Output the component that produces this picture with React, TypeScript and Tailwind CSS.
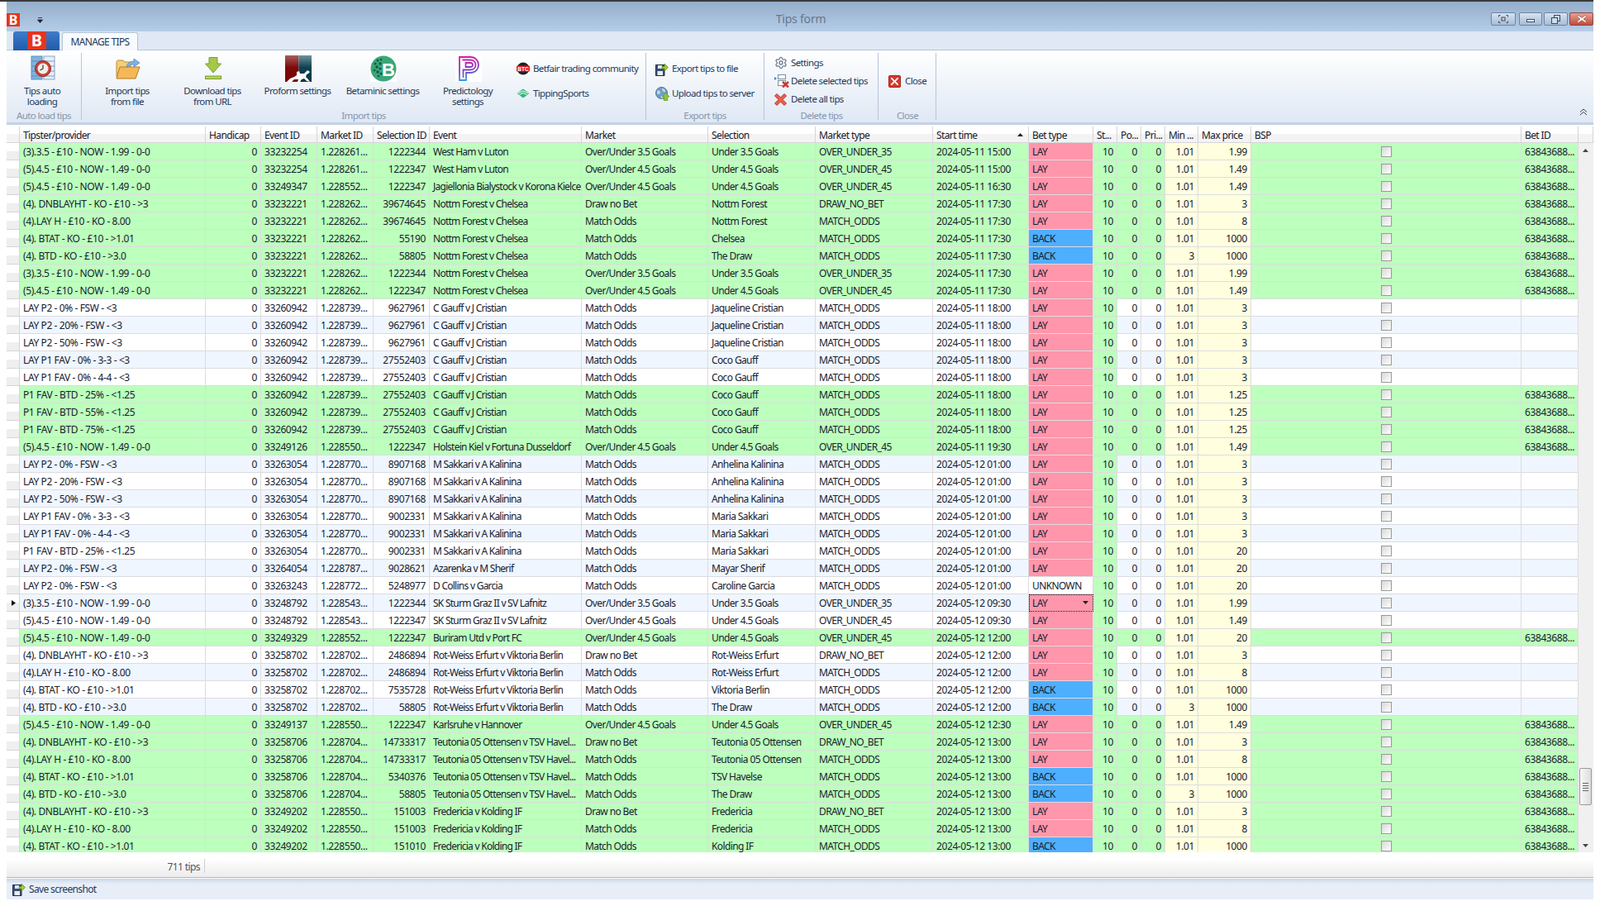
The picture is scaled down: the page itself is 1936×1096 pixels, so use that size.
import { Settings } from 'lucide-react';

type Row = {
  tip: string;
  event: string;
  market: string;
  sel: string;
  name: string;
  mkt: 'O35' | 'O45' | 'DNB' | 'MO';
  runner?: string;
  start: string;
  bet: string;
  min?: string;
  max: string;
  green?: boolean;
  selected?: boolean;
};

const markets = {
  O35: ['Over/Under 3.5 Goals', 'Under 3.5 Goals', 'OVER_UNDER_35'],
  O45: ['Over/Under 4.5 Goals', 'Under 4.5 Goals', 'OVER_UNDER_45'],
  DNB: ['Draw no Bet', '', 'DRAW_NO_BET'],
  MO: ['Match Odds', '', 'MATCH_ODDS'],
};

const T35 = '(3).3.5 - £10 - NOW - 1.99 - 0-0';
const T45 = '(5).4.5 - £10 - NOW - 1.49 - 0-0';
const DNB = '(4). DNBLAYHT - KO - £10 - >3';
const LH = '(4).LAY H - £10 - KO - 8.00';
const BTAT = '(4). BTAT - KO - £10 - >1.01';
const BTD = '(4). BTD - KO - £10 - >3.0';
const P0 = 'LAY P2 - 0% - FSW - <3';
const P20 = 'LAY P2 - 20% - FSW - <3';
const P50 = 'LAY P2 - 50% - FSW - <3';
const F33 = 'LAY P1 FAV - 0% - 3-3 - <3';
const F44 = 'LAY P1 FAV - 0% - 4-4 - <3';
const NF = 'Nottm Forest v Chelsea';
const CG = 'C Gauff v J Cristian';
const MS = 'M Sakkari v A Kalinina';
const RW = 'Rot-Weiss Erfurt v Viktoria Berlin';
const TO = 'Teutonia 05 Ottensen v TSV Havel...';
const FK = 'Fredericia v Kolding IF';

const rows: Row[] = [
  { tip: T35, event: '33232254', market: '1.228261...', sel: '1222344', name: 'West Ham v Luton', mkt: 'O35', start: '2024-05-11 15:00', bet: 'LAY', max: '1.99', green: true },
  { tip: T45, event: '33232254', market: '1.228261...', sel: '1222347', name: 'West Ham v Luton', mkt: 'O45', start: '2024-05-11 15:00', bet: 'LAY', max: '1.49', green: true },
  { tip: T45, event: '33249347', market: '1.228552...', sel: '1222347', name: 'Jagiellonia Bialystock v Korona Kielce', mkt: 'O45', start: '2024-05-11 16:30', bet: 'LAY', max: '1.49', green: true },
  { tip: DNB, event: '33232221', market: '1.228262...', sel: '39674645', name: NF, mkt: 'DNB', runner: 'Nottm Forest', start: '2024-05-11 17:30', bet: 'LAY', max: '3', green: true },
  { tip: LH, event: '33232221', market: '1.228262...', sel: '39674645', name: NF, mkt: 'MO', runner: 'Nottm Forest', start: '2024-05-11 17:30', bet: 'LAY', max: '8', green: true },
  { tip: BTAT, event: '33232221', market: '1.228262...', sel: '55190', name: NF, mkt: 'MO', runner: 'Chelsea', start: '2024-05-11 17:30', bet: 'BACK', max: '1000', green: true },
  { tip: BTD, event: '33232221', market: '1.228262...', sel: '58805', name: NF, mkt: 'MO', runner: 'The Draw', start: '2024-05-11 17:30', bet: 'BACK', min: '3', max: '1000', green: true },
  { tip: T35, event: '33232221', market: '1.228262...', sel: '1222344', name: NF, mkt: 'O35', start: '2024-05-11 17:30', bet: 'LAY', max: '1.99', green: true },
  { tip: T45, event: '33232221', market: '1.228262...', sel: '1222347', name: NF, mkt: 'O45', start: '2024-05-11 17:30', bet: 'LAY', max: '1.49', green: true },
  { tip: P0, event: '33260942', market: '1.228739...', sel: '9627961', name: CG, mkt: 'MO', runner: 'Jaqueline Cristian', start: '2024-05-11 18:00', bet: 'LAY', max: '3' },
  { tip: P20, event: '33260942', market: '1.228739...', sel: '9627961', name: CG, mkt: 'MO', runner: 'Jaqueline Cristian', start: '2024-05-11 18:00', bet: 'LAY', max: '3' },
  { tip: P50, event: '33260942', market: '1.228739...', sel: '9627961', name: CG, mkt: 'MO', runner: 'Jaqueline Cristian', start: '2024-05-11 18:00', bet: 'LAY', max: '3' },
  { tip: F33, event: '33260942', market: '1.228739...', sel: '27552403', name: CG, mkt: 'MO', runner: 'Coco Gauff', start: '2024-05-11 18:00', bet: 'LAY', max: '3' },
  { tip: F44, event: '33260942', market: '1.228739...', sel: '27552403', name: CG, mkt: 'MO', runner: 'Coco Gauff', start: '2024-05-11 18:00', bet: 'LAY', max: '3' },
  { tip: 'P1 FAV - BTD - 25% - <1.25', event: '33260942', market: '1.228739...', sel: '27552403', name: CG, mkt: 'MO', runner: 'Coco Gauff', start: '2024-05-11 18:00', bet: 'LAY', max: '1.25', green: true },
  { tip: 'P1 FAV - BTD - 55% - <1.25', event: '33260942', market: '1.228739...', sel: '27552403', name: CG, mkt: 'MO', runner: 'Coco Gauff', start: '2024-05-11 18:00', bet: 'LAY', max: '1.25', green: true },
  { tip: 'P1 FAV - BTD - 75% - <1.25', event: '33260942', market: '1.228739...', sel: '27552403', name: CG, mkt: 'MO', runner: 'Coco Gauff', start: '2024-05-11 18:00', bet: 'LAY', max: '1.25', green: true },
  { tip: T45, event: '33249126', market: '1.228550...', sel: '1222347', name: 'Holstein Kiel v Fortuna Dusseldorf', mkt: 'O45', start: '2024-05-11 19:30', bet: 'LAY', max: '1.49', green: true },
  { tip: P0, event: '33263054', market: '1.228770...', sel: '8907168', name: MS, mkt: 'MO', runner: 'Anhelina Kalinina', start: '2024-05-12 01:00', bet: 'LAY', max: '3' },
  { tip: P20, event: '33263054', market: '1.228770...', sel: '8907168', name: MS, mkt: 'MO', runner: 'Anhelina Kalinina', start: '2024-05-12 01:00', bet: 'LAY', max: '3' },
  { tip: P50, event: '33263054', market: '1.228770...', sel: '8907168', name: MS, mkt: 'MO', runner: 'Anhelina Kalinina', start: '2024-05-12 01:00', bet: 'LAY', max: '3' },
  { tip: F33, event: '33263054', market: '1.228770...', sel: '9002331', name: MS, mkt: 'MO', runner: 'Maria Sakkari', start: '2024-05-12 01:00', bet: 'LAY', max: '3' },
  { tip: F44, event: '33263054', market: '1.228770...', sel: '9002331', name: MS, mkt: 'MO', runner: 'Maria Sakkari', start: '2024-05-12 01:00', bet: 'LAY', max: '3' },
  { tip: 'P1 FAV - BTD - 25% - <1.25', event: '33263054', market: '1.228770...', sel: '9002331', name: MS, mkt: 'MO', runner: 'Maria Sakkari', start: '2024-05-12 01:00', bet: 'LAY', max: '20' },
  { tip: P0, event: '33264054', market: '1.228787...', sel: '9028621', name: 'Azarenka v M Sherif', mkt: 'MO', runner: 'Mayar Sherif', start: '2024-05-12 01:00', bet: 'LAY', max: '20' },
  { tip: P0, event: '33263243', market: '1.228772...', sel: '5248977', name: 'D Collins v Garcia', mkt: 'MO', runner: 'Caroline Garcia', start: '2024-05-12 01:00', bet: 'UNKNOWN', max: '20' },
  { tip: T35, event: '33248792', market: '1.228543...', sel: '1222344', name: 'SK Sturm Graz II v SV Lafnitz', mkt: 'O35', start: '2024-05-12 09:30', bet: 'LAY', max: '1.99', selected: true },
  { tip: T45, event: '33248792', market: '1.228543...', sel: '1222347', name: 'SK Sturm Graz II v SV Lafnitz', mkt: 'O45', start: '2024-05-12 09:30', bet: 'LAY', max: '1.49' },
  { tip: T45, event: '33249329', market: '1.228552...', sel: '1222347', name: 'Buriram Utd v Port FC', mkt: 'O45', start: '2024-05-12 12:00', bet: 'LAY', max: '20', green: true },
  { tip: DNB, event: '33258702', market: '1.228702...', sel: '2486894', name: RW, mkt: 'DNB', runner: 'Rot-Weiss Erfurt', start: '2024-05-12 12:00', bet: 'LAY', max: '3' },
  { tip: LH, event: '33258702', market: '1.228702...', sel: '2486894', name: RW, mkt: 'MO', runner: 'Rot-Weiss Erfurt', start: '2024-05-12 12:00', bet: 'LAY', max: '8' },
  { tip: BTAT, event: '33258702', market: '1.228702...', sel: '7535728', name: RW, mkt: 'MO', runner: 'Viktoria Berlin', start: '2024-05-12 12:00', bet: 'BACK', max: '1000' },
  { tip: BTD, event: '33258702', market: '1.228702...', sel: '58805', name: RW, mkt: 'MO', runner: 'The Draw', start: '2024-05-12 12:00', bet: 'BACK', min: '3', max: '1000' },
  { tip: T45, event: '33249137', market: '1.228550...', sel: '1222347', name: 'Karlsruhe v Hannover', mkt: 'O45', start: '2024-05-12 12:30', bet: 'LAY', max: '1.49', green: true },
  { tip: DNB, event: '33258706', market: '1.228704...', sel: '14733317', name: TO, mkt: 'DNB', runner: 'Teutonia 05 Ottensen', start: '2024-05-12 13:00', bet: 'LAY', max: '3', green: true },
  { tip: LH, event: '33258706', market: '1.228704...', sel: '14733317', name: TO, mkt: 'MO', runner: 'Teutonia 05 Ottensen', start: '2024-05-12 13:00', bet: 'LAY', max: '8', green: true },
  { tip: BTAT, event: '33258706', market: '1.228704...', sel: '5340376', name: TO, mkt: 'MO', runner: 'TSV Havelse', start: '2024-05-12 13:00', bet: 'BACK', max: '1000', green: true },
  { tip: BTD, event: '33258706', market: '1.228704...', sel: '58805', name: TO, mkt: 'MO', runner: 'The Draw', start: '2024-05-12 13:00', bet: 'BACK', min: '3', max: '1000', green: true },
  { tip: DNB, event: '33249202', market: '1.228550...', sel: '151003', name: FK, mkt: 'DNB', runner: 'Fredericia', start: '2024-05-12 13:00', bet: 'LAY', max: '3', green: true },
  { tip: LH, event: '33249202', market: '1.228550...', sel: '151003', name: FK, mkt: 'MO', runner: 'Fredericia', start: '2024-05-12 13:00', bet: 'LAY', max: '8', green: true },
  { tip: BTAT, event: '33249202', market: '1.228550...', sel: '151010', name: FK, mkt: 'MO', runner: 'Kolding IF', start: '2024-05-12 13:00', bet: 'BACK', max: '1000', green: true },
];

const gridCols =
  'grid grid-cols-[16px_225px_67px_68px_68px_68px_184px_153px_130px_142px_116px_78px_29px_29px_29px_40px_64px_327px_69px]';
const cell = 'h-[21px] overflow-hidden whitespace-nowrap border-r border-b border-[#dcdce0] px-[4px] leading-[22px]';
const wordCell = `${cell} tracking-[-0.62px]`;
const eventCell = `${cell} tracking-[-0.74px]`;
const headCell = 'h-[20px] overflow-hidden whitespace-nowrap border-r border-b border-[#d5d5d8] pl-[4px] pr-[2px] leading-[21px] tracking-[-0.6px] bg-gradient-to-b from-white from-50% to-[#f3f3f3] to-50%';
const ribbonText = 'text-[11.5px] tracking-[-0.62px] text-[#1e395b]';

const headers = ['', 'Tipster/provider', 'Handicap', 'Event ID', 'Market ID', 'Selection ID', 'Event', 'Market', 'Selection', 'Market type', 'Start time', 'Bet type', 'St...', 'Po...', 'Pri...', 'Min ...', 'Max price', 'BSP', 'Bet ID'];

function TipRow({ row, index }: { row: Row; index: number }) {
  const [marketName, sel, type] = markets[row.mkt];
  const bg = row.green ? 'bg-[#bdffbd]' : index % 2 === 0 ? 'bg-[#eff6ff]' : 'bg-white';
  const betBg = row.bet === 'LAY' ? 'bg-[#ff96ab]' : row.bet === 'BACK' ? 'bg-[#4fafff]' : 'bg-white';
  return (
    <div className={`${gridCols} ${bg}`}>
      <div className="relative h-[21px] border-r border-b border-[#d5d5d8] bg-gradient-to-b from-white from-50% to-[#efefef] to-50%">
        {row.selected && (
          <svg className="absolute left-[6px] top-[7px]" width="5" height="7" viewBox="0 0 5 7">
            <path d="M0 0L5 3.5L0 7z" fill="#111" />
          </svg>
        )}
      </div>
      <div className={cell}>{row.tip}</div>
      <div className={`${cell} text-right`}>0</div>
      <div className={cell}>{row.event}</div>
      <div className={cell}>{row.market}</div>
      <div className={`${cell} text-right`}>{row.sel}</div>
      <div className={eventCell}>{row.name}</div>
      <div className={wordCell}>{marketName}</div>
      <div className={wordCell}>{row.runner ?? sel}</div>
      <div className={wordCell}>{type}</div>
      <div className={cell}>{row.start}</div>
      {row.selected ? (
        <div className={`${wordCell} relative ${betBg} outline-1 outline-dotted outline-offset-[-1px] outline-black`}>
          {row.bet}
          <svg className="absolute right-[5px] top-[8px]" width="7" height="4" viewBox="0 0 7 4">
            <path d="M0 0H7L3.5 4z" fill="#222" />
          </svg>
        </div>
      ) : (
        <div className={`${wordCell} ${betBg}`}>{row.bet}</div>
      )}
      <div className={`${cell} bg-[#bdffbd] text-right`}>10</div>
      <div className={`${cell} text-right`}>0</div>
      <div className={`${cell} text-right`}>0</div>
      <div className={`${cell} bg-[#ffffe0] text-right`}>{row.min ?? '1.01'}</div>
      <div className={`${cell} bg-[#ffffe0] text-right`}>{row.max}</div>
      <div className={`${cell} flex items-center justify-center`}>
        <div className="h-[13px] w-[13px] border border-[#9a9a9a] bg-gradient-to-br from-[#d8d8d8] to-white" />
      </div>
      <div className={cell}>{row.green ? '63843688...' : ''}</div>
    </div>
  );
}

function ClockIcon() {
  return (
    <svg width="30" height="30" viewBox="0 0 30 30">
      <rect x="1" y="1" width="13" height="28" fill="#7fb2dc" stroke="#5b8fbe" />
      <rect x="16" y="1" width="13" height="28" fill="#e6eef7" stroke="#8aa4c2" />
      <path d="M1 7H14M1 13H14M1 19H14M1 25H14M16 7H29M16 13H29M16 19H29M16 25H29" stroke="#4f82b3" strokeWidth="1" opacity="0.7" />
      <circle cx="15" cy="16" r="9.5" fill="#c9413a" stroke="#8c2a26" />
      <circle cx="15" cy="16" r="6.5" fill="#f3efe6" />
      <path d="M15 11.5V16L11.5 18" stroke="#333" strokeWidth="1.2" fill="none" />
    </svg>
  );
}

function FolderIcon() {
  return (
    <svg width="30" height="26" viewBox="0 0 30 26">
      <path d="M1 5C1 4 2 3 3 3H9L11 5H18V24H3C2 24 1 23 1 22z" fill="#f1cf7a" stroke="#c08a2b" />
      <path d="M5 11H29L24 25H1z" fill="#f6b756" stroke="#b97a1e" />
      <path d="M13 11C14 6 18 4 22 4V1L29 6L22 11V8C18 8 16 9 15 11z" fill="#7fb0e0" stroke="#4d82bb" strokeWidth="0.7" />
    </svg>
  );
}

function DownloadIcon() {
  return (
    <svg width="20" height="27" viewBox="0 0 20 27">
      <path d="M5 0.5H15V8H19.5L10 19L0.5 8H5z" fill="#a5c84a" stroke="#7a9f33" />
      <rect x="0.5" y="23" width="19" height="3.5" fill="#b4d45a" stroke="#7a9f33" />
    </svg>
  );
}

function ProformIcon() {
  return (
    <svg width="32" height="32" viewBox="0 0 32 32">
      <defs>
        <linearGradient id="pfL" x1="0" y1="0" x2="0" y2="1">
          <stop offset="0" stopColor="#a85c5c" />
          <stop offset="0.45" stopColor="#7c0b0b" />
          <stop offset="1" stopColor="#7a0000" />
        </linearGradient>
        <linearGradient id="pfR" x1="0" y1="0" x2="0" y2="1">
          <stop offset="0" stopColor="#6f929c" />
          <stop offset="0.45" stopColor="#0f4250" />
          <stop offset="1" stopColor="#073642" />
        </linearGradient>
      </defs>
      <rect x="0" y="0" width="16.5" height="32" fill="url(#pfL)" />
      <rect x="16.5" y="0" width="15.5" height="32" fill="url(#pfR)" />
      <path d="M2 32L6 28L11 26L14 24L14 20L17 19L18 22L23 22L27 18L30 20L28 22L26 23L25 26L28 29L30 32L26 31L23 28L20 29L18 32L15 32L16 29L11 29L8 32z" fill="#fff" />
    </svg>
  );
}

function BetaminicIcon() {
  return (
    <svg width="32" height="32" viewBox="0 0 32 32">
      <rect width="32" height="32" fill="#fff" />
      <circle cx="16" cy="16" r="15.5" fill="#3aa678" />
      <g fill="#14593f">
        <circle cx="6" cy="10" r="1.5" /><circle cx="9" cy="6" r="1.5" /><circle cx="12" cy="10" r="1.7" />
        <circle cx="8" cy="14" r="1.7" /><circle cx="12" cy="16" r="1.5" /><circle cx="5" cy="18" r="1.3" />
        <circle cx="9" cy="20" r="1.7" /><circle cx="13" cy="22" r="1.5" /><circle cx="10" cy="25" r="1.3" />
        <circle cx="13" cy="5" r="1.2" />
      </g>
      <text x="14" y="24.5" fill="#fff" fontSize="22" fontWeight="700" fontFamily="'Liberation Sans', sans-serif">B</text>
    </svg>
  );
}

function PredictologyIcon() {
  return (
    <svg width="32" height="32" viewBox="0 0 32 32" fill="none">
      <defs>
        <linearGradient id="prG" gradientUnits="userSpaceOnUse" x1="8" y1="2" x2="14" y2="30">
          <stop offset="0" stopColor="#e0189a" />
          <stop offset="0.55" stopColor="#8a3ac0" />
          <stop offset="1" stopColor="#2f9fe6" />
        </linearGradient>
      </defs>
      <rect width="32" height="32" fill="#fff" />
      <path d="M5 2H18C25 2 28 7 28 11.5C28 16 25 21 18 21H13V30H5z" stroke="url(#prG)" strokeWidth="1.8" />
      <path d="M8.5 5.5H18C22.5 5.5 24.5 8.5 24.5 11.5C24.5 14.5 22.5 17.5 18 17.5H9.5V27" stroke="url(#prG)" strokeWidth="1.8" />
      <path d="M12.5 9H18C20 9 21 10 21 11.5C21 13 20 14 18 14H12.5z" stroke="url(#prG)" strokeWidth="1.8" />
    </svg>
  );
}

function BtcIcon() {
  return (
    <svg width="16" height="16" viewBox="0 0 16 16">
      <rect width="16" height="16" fill="#fff" />
      <circle cx="8" cy="8" r="7.5" fill="#222" />
      <rect x="0" y="4.5" width="16" height="7" rx="1" fill="#e3171c" />
      <text x="8" y="10.6" fill="#fff" fontSize="6.5" fontWeight="700" textAnchor="middle" letterSpacing="0" fontFamily="'Liberation Sans', sans-serif">BTC</text>
    </svg>
  );
}

function TippingIcon() {
  return (
    <svg width="16" height="12" viewBox="0 0 16 12" fill="none">
      <path d="M8 0.5L15.5 6L8 11.5L0.5 6z" fill="#34b779" />
      <path d="M1.5 6L8 3L14.5 6" stroke="#fff" strokeWidth="1" />
      <path d="M3.5 7.5L8 5.5L12.5 7.5" stroke="#fff" strokeWidth="1" />
    </svg>
  );
}

function DiskIcon() {
  return (
    <svg width="16" height="17" viewBox="0 0 16 17">
      <path d="M0.5 3.5H11V16.5H0.5z" fill="#3c4f73" stroke="#1f2c48" />
      <rect x="3" y="4" width="5" height="4" fill="#dfe6ef" />
      <rect x="2.5" y="11" width="6.5" height="5" fill="#e8edf4" />
      <path d="M8 5.5H11V2L15.5 6.5L11 11V8H8z" fill="#9ccb3b" stroke="#5f8e1d" strokeWidth="0.7" />
    </svg>
  );
}

function GlobeIcon() {
  return (
    <svg width="17" height="17" viewBox="0 0 17 17">
      <circle cx="7.5" cy="7.5" r="7" fill="#6f9fc9" stroke="#47739c" />
      <path d="M2 5C4 3 6 5 6 7C6 9 3 10 2 8zM8 2C10 2 13 4 12 6C10 7 8 5 8 2zM7 11C9 10 10 12 9 14C8 15 6 13 7 11z" fill="#c9d6cf" />
      <path d="M12.5 7.5L17 12H14.7V17H10.3V12H8z" fill="#8cc63f" stroke="#5f8e1d" strokeWidth="0.7" />
    </svg>
  );
}

function DeleteSelIcon() {
  return (
    <svg width="18" height="16" viewBox="0 0 18 16">
      <path d="M0 3L3 5L0 7z" fill="#3d82c9" />
      <rect x="4.5" y="0.5" width="9" height="5" fill="#fff" stroke="#7a8ea6" />
      <rect x="4.5" y="7.5" width="9" height="6" fill="#fff" stroke="#7a8ea6" />
      <path d="M10 9L17 15.5M17 9L10 15.5" stroke="#c8372d" strokeWidth="2.4" />
    </svg>
  );
}

function BigXIcon() {
  return (
    <svg width="15" height="15" viewBox="0 0 15 15">
      <path d="M3 0.5L7.5 5L12 0.5L14.5 3L10 7.5L14.5 12L12 14.5L7.5 10L3 14.5L0.5 12L5 7.5L0.5 3z" fill="#e8604c" stroke="#b5362a" />
    </svg>
  );
}

function CloseIcon() {
  return (
    <svg width="15" height="15" viewBox="0 0 15 15">
      <rect x="0.5" y="0.5" width="14" height="14" rx="1" fill="#d6392e" stroke="#a2241c" />
      <path d="M4 3L7.5 6.5L11 3L12 4L8.5 7.5L12 11L11 12L7.5 8.5L4 12L3 11L6.5 7.5L3 4z" fill="#fff" stroke="#fff" strokeWidth="0.6" />
    </svg>
  );
}

function BrandMark({ className }: { className: string }) {
  return (
    <div className={`flex items-center justify-center bg-[#e8341c] font-bold tracking-normal text-white ${className}`}>B</div>
  );
}

function GroupLabel({ label, className }: { label: string; className: string }) {
  return <div className={`absolute top-[131px] -translate-x-1/2 whitespace-nowrap text-[11.5px] tracking-[-0.62px] text-[#8496ad] ${className}`}>{label}</div>;
}

function BigLabel({ lines, className }: { lines: string[]; className: string }) {
  return (
    <div className={`absolute top-[103px] -translate-x-1/2 whitespace-nowrap text-center leading-[13px] ${ribbonText} ${className}`}>
      {lines.map((l) => (
        <div key={l}>{l}</div>
      ))}
    </div>
  );
}

function SmallButton({ label, className, children }: { label: string; className: string; children: React.ReactNode }) {
  return (
    <div className={`absolute flex h-[16px] items-center whitespace-nowrap ${ribbonText} ${className}`}>
      <div className="flex w-[20px] shrink-0 items-center">{children}</div>
      {label}
    </div>
  );
}

function WinButton({ className, children }: { className: string; children: React.ReactNode }) {
  return (
    <div className={`flex h-[16px] items-center justify-center rounded-[2px] border border-[#6f86a3] ${className}`}>{children}</div>
  );
}

function Separator({ className }: { className: string }) {
  return <div className={`absolute top-[64px] h-[81px] w-px bg-[#b7c6d9] ${className}`} />;
}

export default function App() {
  return (
    <div className="relative h-[1096px] w-[1936px] overflow-hidden bg-white font-['Liberation_Sans',sans-serif] text-[12px] tracking-[-0.4px] text-[#16202e]">
      <div className="absolute left-0 top-0 h-[2px] w-[1928px] bg-[#3a3a3a]" />

      {/* title bar */}
      <div className="absolute left-[8px] right-[8px] top-[2px] h-[36px] bg-gradient-to-b from-[#94aecb] to-[#b5cde7]" />
      <BrandMark className="absolute left-[8px] top-[16px] h-[16px] w-[16px] text-[16px]" />
      <svg className="absolute left-[45px] top-[21px]" width="7" height="7" viewBox="0 0 7 7">
        <path d="M1 0.5H6M0.5 3H6.5L3.5 6.5z" stroke="#223" strokeWidth="0.8" fill="#223" />
      </svg>
      <div className="absolute left-[969px] top-[12px] -translate-x-1/2 text-[14px] tracking-[-0.2px] text-[#66778e]">Tips form</div>
      <div className="absolute left-[1804px] top-[15px] flex gap-[2px]">
        <WinButton className="mr-[2px] w-[30px] bg-gradient-to-b from-[#d7e3f1] to-[#a6bcd6]">
          <svg width="12" height="10" viewBox="0 0 12 10" fill="none" stroke="#3b4a60">
            <path d="M0.5 2.5V0.5H2.5M9.5 0.5H11.5V2.5M11.5 7.5V9.5H9.5M2.5 9.5H0.5V7.5" />
            <rect x="4" y="3" width="4" height="4" />
          </svg>
        </WinButton>
        <WinButton className="w-[28px] bg-gradient-to-b from-[#d7e3f1] to-[#a6bcd6]">
          <div className="mt-[3px] h-[4px] w-[10px] border border-[#3b4a60] bg-white" />
        </WinButton>
        <WinButton className="w-[29px] bg-gradient-to-b from-[#d7e3f1] to-[#a6bcd6]">
          <svg width="11" height="11" viewBox="0 0 11 11" fill="none" stroke="#3b4a60">
            <rect x="3.5" y="0.5" width="7" height="7" />
            <rect x="0.5" y="3.5" width="7" height="7" fill="#cfdcec" />
          </svg>
        </WinButton>
        <WinButton className="w-[29px] border-[#8a4a46] bg-gradient-to-b from-[#e4a195] to-[#c1493c]">
          <svg width="12" height="10" viewBox="0 0 12 10">
            <path d="M1.5 0.5L6 3.5L10.5 0.5L11.5 2L8 5L11.5 8L10.5 9.5L6 6.5L1.5 9.5L0.5 8L4 5L0.5 2z" fill="#fff" stroke="#7a3a36" strokeWidth="0.5" />
          </svg>
        </WinButton>
      </div>

      {/* tab strip */}
      <div className="absolute left-[8px] right-[8px] top-[38px] h-[23px] border-b border-[#b3c4da] bg-[#dfe8f4]" />
      <div className="absolute left-[16px] top-[38px] h-[23px] w-[56px] rounded-t-[3px] bg-gradient-to-b from-[#3f7cc9] to-[#215bab]" />
      <BrandMark className="absolute left-[33px] top-[38px] h-[22px] w-[23px] text-[20px]" />
      <div className="absolute left-[75px] top-[39px] flex h-[23px] w-[92px] items-center justify-center rounded-t-[3px] border border-b-0 border-[#b3c4da] bg-gradient-to-b from-[#fafcff] to-[#f6f9fd] tracking-[-0.65px] text-[#1e395b]">MANAGE TIPS</div>

      {/* ribbon */}
      <div className="absolute left-[8px] right-[8px] top-[61px] h-[87px] bg-gradient-to-b from-white to-[#dfe8f4]" />
      <div className="absolute left-[8px] right-[8px] top-[148px] h-[3px] bg-[#c5d2e3]" />
      <Separator className="left-[98px]" />
      <Separator className="left-[781px]" />
      <Separator className="left-[924px]" />
      <Separator className="left-[1062px]" />
      <Separator className="left-[1132px]" />

      <div className="absolute left-[37px] top-[67px]"><ClockIcon /></div>
      <BigLabel lines={['Tips auto', 'loading']} className="left-[51px]" />
      <GroupLabel label="Auto load tips" className="left-[53px]" />

      <div className="absolute left-[140px] top-[70px]"><FolderIcon /></div>
      <BigLabel lines={['Import tips', 'from file']} className="left-[154px]" />
      <div className="absolute left-[248px] top-[69px]"><DownloadIcon /></div>
      <BigLabel lines={['Download tips', 'from URL']} className="left-[257px]" />
      <div className="absolute left-[345px] top-[67px]"><ProformIcon /></div>
      <BigLabel lines={['Proform settings']} className="left-[360px]" />
      <div className="absolute left-[448px] top-[67px]"><BetaminicIcon /></div>
      <BigLabel lines={['Betaminic settings']} className="left-[463px]" />
      <div className="absolute left-[551px] top-[67px]"><PredictologyIcon /></div>
      <BigLabel lines={['Predictology', 'settings']} className="left-[566px]" />
      <SmallButton label="Betfair trading community" className="left-[625px] top-[75px] tracking-[-0.8px]"><BtcIcon /></SmallButton>
      <SmallButton label="TippingSports" className="left-[625px] top-[105px]"><TippingIcon /></SmallButton>
      <GroupLabel label="Import tips" className="left-[440px]" />

      <SmallButton label="Export tips to file" className="left-[793px] top-[75px]"><DiskIcon /></SmallButton>
      <SmallButton label="Upload tips to server" className="left-[793px] top-[105px]"><GlobeIcon /></SmallButton>
      <GroupLabel label="Export tips" className="left-[853px]" />

      <SmallButton label="Settings" className="left-[937px] top-[68px]"><Settings size={16} color="#6f7f92" /></SmallButton>
      <SmallButton label="Delete selected tips" className="left-[937px] top-[90px]"><DeleteSelIcon /></SmallButton>
      <SmallButton label="Delete all tips" className="left-[937px] top-[112px]"><BigXIcon /></SmallButton>
      <GroupLabel label="Delete tips" className="left-[994px]" />

      <SmallButton label="Close" className="left-[1075px] top-[90px]"><CloseIcon /></SmallButton>
      <GroupLabel label="Close" className="left-[1098px]" />

      <svg className="absolute left-[1911px] top-[131px]" width="10" height="9" viewBox="0 0 10 9" fill="none" stroke="#38475a">
        <path d="M1 4.5L5 1L9 4.5M1 8L5 4.5L9 8" />
      </svg>

      {/* grid */}
      <div className="absolute left-[8px] right-[8px] top-[153px]">
        <div className="flex">
          <div className={gridCols}>
            {headers.map((h) => (
              <div key={h || 'corner'} className={`${headCell} relative`}>
                {h}
                {h === 'Start time' && (
                  <svg className="absolute right-[6px] top-[8px]" width="7" height="4" viewBox="0 0 7 4">
                    <path d="M0 4H7L3.5 0z" fill="#222" />
                  </svg>
                )}
              </div>
            ))}
          </div>
          <div className={`${headCell} w-[18px]`} />
        </div>
        <div className="relative flex h-[858px] overflow-hidden">
          <div>
            {rows.map((r, i) => (
              <TipRow key={i} row={r} index={i} />
            ))}
          </div>
          <div className="relative h-full w-[18px] bg-[#f0f0f0]">
            <svg className="absolute left-[5px] top-[7px]" width="7" height="4" viewBox="0 0 7 4">
              <path d="M0 4H7L3.5 0z" fill="#444" />
            </svg>
            <svg className="absolute left-[5px] top-[848px]" width="7" height="4" viewBox="0 0 7 4">
              <path d="M0 0H7L3.5 4z" fill="#444" />
            </svg>
            <div className="absolute left-[1px] top-[756px] flex h-[45px] w-[15px] flex-col items-center justify-center gap-[2px] rounded-[2px] border border-[#9a9a9a] bg-gradient-to-r from-[#f8f8f8] to-[#dcdcdc]">
              <div className="h-px w-[7px] bg-[#666]" />
              <div className="h-px w-[7px] bg-[#666]" />
              <div className="h-px w-[7px] bg-[#666]" />
              <div className="h-px w-[7px] bg-[#666]" />
            </div>
          </div>
        </div>
        {/* footer */}
        <div className="relative h-[31px] border-b border-[#b5b5b5] bg-gradient-to-b from-white from-25% to-[#ececec]">
          <div className="absolute left-[0px] top-[9px] w-[234px] text-right tracking-[-0.6px] text-[#4d5561]">711 tips</div>
          <div className="absolute left-[239px] top-[8px] h-[17px] w-px bg-[#cfcfcf]" />
        </div>
      </div>

      {/* status bar */}
      <div className="absolute left-[8px] right-[8px] top-[1063px] flex h-[25px] items-center bg-gradient-to-b from-[#c9d6e6] from-0% via-[#e8eef7] via-25% to-[#e8eef7] pl-[7px] tracking-[-0.65px] text-[#1e395b]">
        <DiskIcon />
        <span className="ml-[4px]">Save screenshot</span>
      </div>
    </div>
  );
}
